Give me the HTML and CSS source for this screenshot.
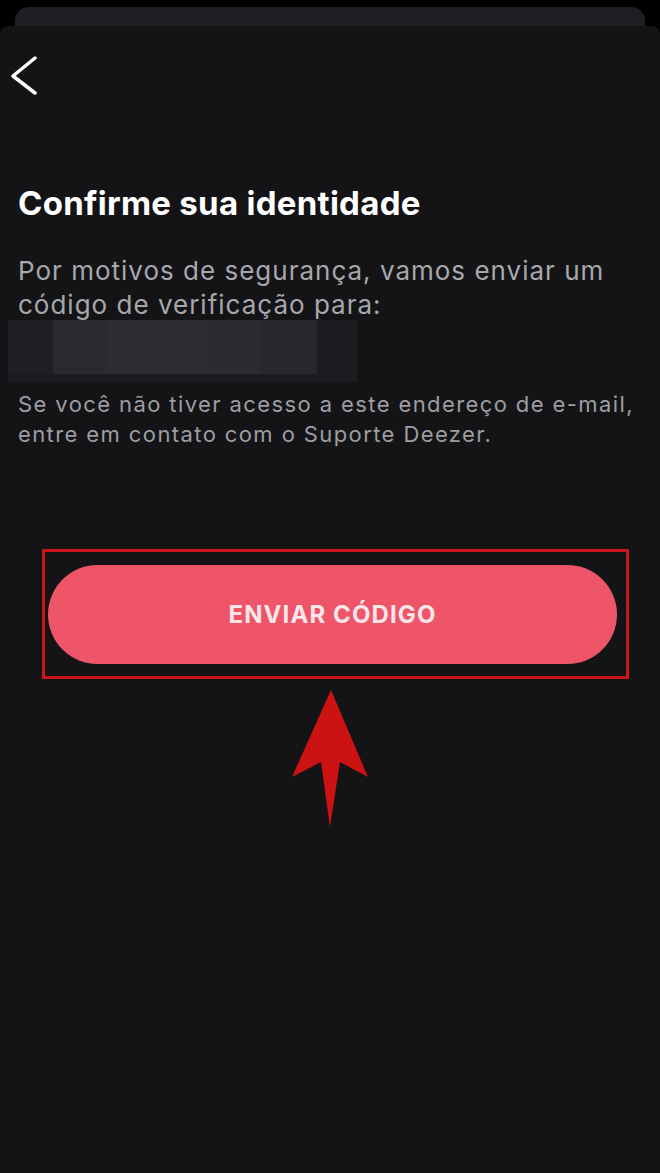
FILE: index.html
```html
<!DOCTYPE html>
<html lang="pt-BR">
<head>
    <meta charset="UTF-8">
    <meta name="viewport" content="width=device-width, initial-scale=1.0">
    <title>Confirme sua identidade</title>
    <link rel="stylesheet" href="styles.css">
</head>
<body>
    <div class="back-sheet"></div>

    <main class="sheet">
        <button class="back-btn" aria-label="Voltar">
            <svg width="28" height="40" viewBox="0 0 28 40">
                <polyline points="25,2 3,20 25,37" fill="none" stroke="#fff" stroke-width="3.5" stroke-linecap="round" stroke-linejoin="round"/>
            </svg>
        </button>

        <h1 class="title">Confirme sua identidade</h1>

        <p class="lead">Por motivos de segurança, vamos enviar um<br>código de verificação para:</p>

        <!-- e-mail borrado -->
        <div class="email-blur">
            <span class="b1"></span>
            <span class="b2"></span>
            <span class="b3"></span>
            <span class="b4"></span>
            <span class="b5"></span>
        </div>

        <p class="note">Se você não tiver acesso a este endereço de e-mail,<br>entre em contato com o Suporte Deezer.</p>

        <div class="highlight">
            <button class="send-btn">ENVIAR CÓDIGO</button>
        </div>

        <div class="pointer">
            <svg width="80" height="140" viewBox="0 0 80 140">
                <path d="M41 0 L78 87 L50 72 L40 137 L31 72 L2 87 Z" fill="#cc1212"/>
            </svg>
        </div>
    </main>
</body>
</html>
```

FILE: styles.css
```css
body {
    margin: 0;
    background-color: #000;
    font-family: Inter, "Noto Sans", Arial, sans-serif;
    min-height: 1173px;
}
.back-sheet {
    margin: 7px 15px 0;
    height: 19px;
    background-color: #1f1f23;
    border-radius: 14px 14px 0 0;
}
.sheet {
    background-color: #141417;
    min-height: 1147px;
    padding: 0 18px;
    border-radius: 8px 8px 0 0;
    box-sizing: border-box;
    overflow: hidden;
}
.back-btn {
    display: block;
    background: none;
    border: 0;
    padding: 0;
    margin: 30px 0 0 -8px;
    cursor: pointer;
}
.back-btn svg { display: block; }
.title {
    margin: 87px 0 0;
    font-size: 33px;
    line-height: 40px;
    font-weight: 700;
    color: #fff;
    letter-spacing: 0.28px;
}
.lead {
    margin: 31px 0 0;
    font-size: 26px;
    line-height: 34px;
    color: #a7a7ac;
    letter-spacing: 1px;
}
.email-blur {
    display: flex;
    margin: -2px 0 0 -10px;
    width: 349px;
    height: 62px;
    background-color: #1c1c20;
}
.email-blur span { display: block; height: 54px; }
.b1 { width: 45px; background-color: #202024; }
.b2 { width: 53px; background-color: #2a2a2e; }
.b3 { width: 100px; background-color: #2d2d31; }
.b4 { width: 55px; background-color: #2b2b2f; }
.b5 { width: 56px; background-color: #28282c; }
.note {
    margin: 7px 0 0;
    font-size: 22px;
    line-height: 30px;
    color: #9d9da2;
    letter-spacing: 1.4px;
}
.highlight {
    margin: 100px 0 0 24px;
    width: 587px;
    box-sizing: border-box;
    border: 3px solid #c8161a;
    padding: 13px 9px 12px 3px;
}
.send-btn {
    display: block;
    width: 100%;
    height: 99px;
    border: 0;
    border-radius: 50px;
    background-color: #ef5569;
    color: #fbe6e9;
    font-family: Inter, "Noto Sans", Arial, sans-serif;
    font-size: 24px;
    font-weight: 700;
    letter-spacing: 1.1px;
    cursor: pointer;
}
.pointer {
    margin: 11px 0 0 272px;
}
.pointer svg { display: block; }
```
